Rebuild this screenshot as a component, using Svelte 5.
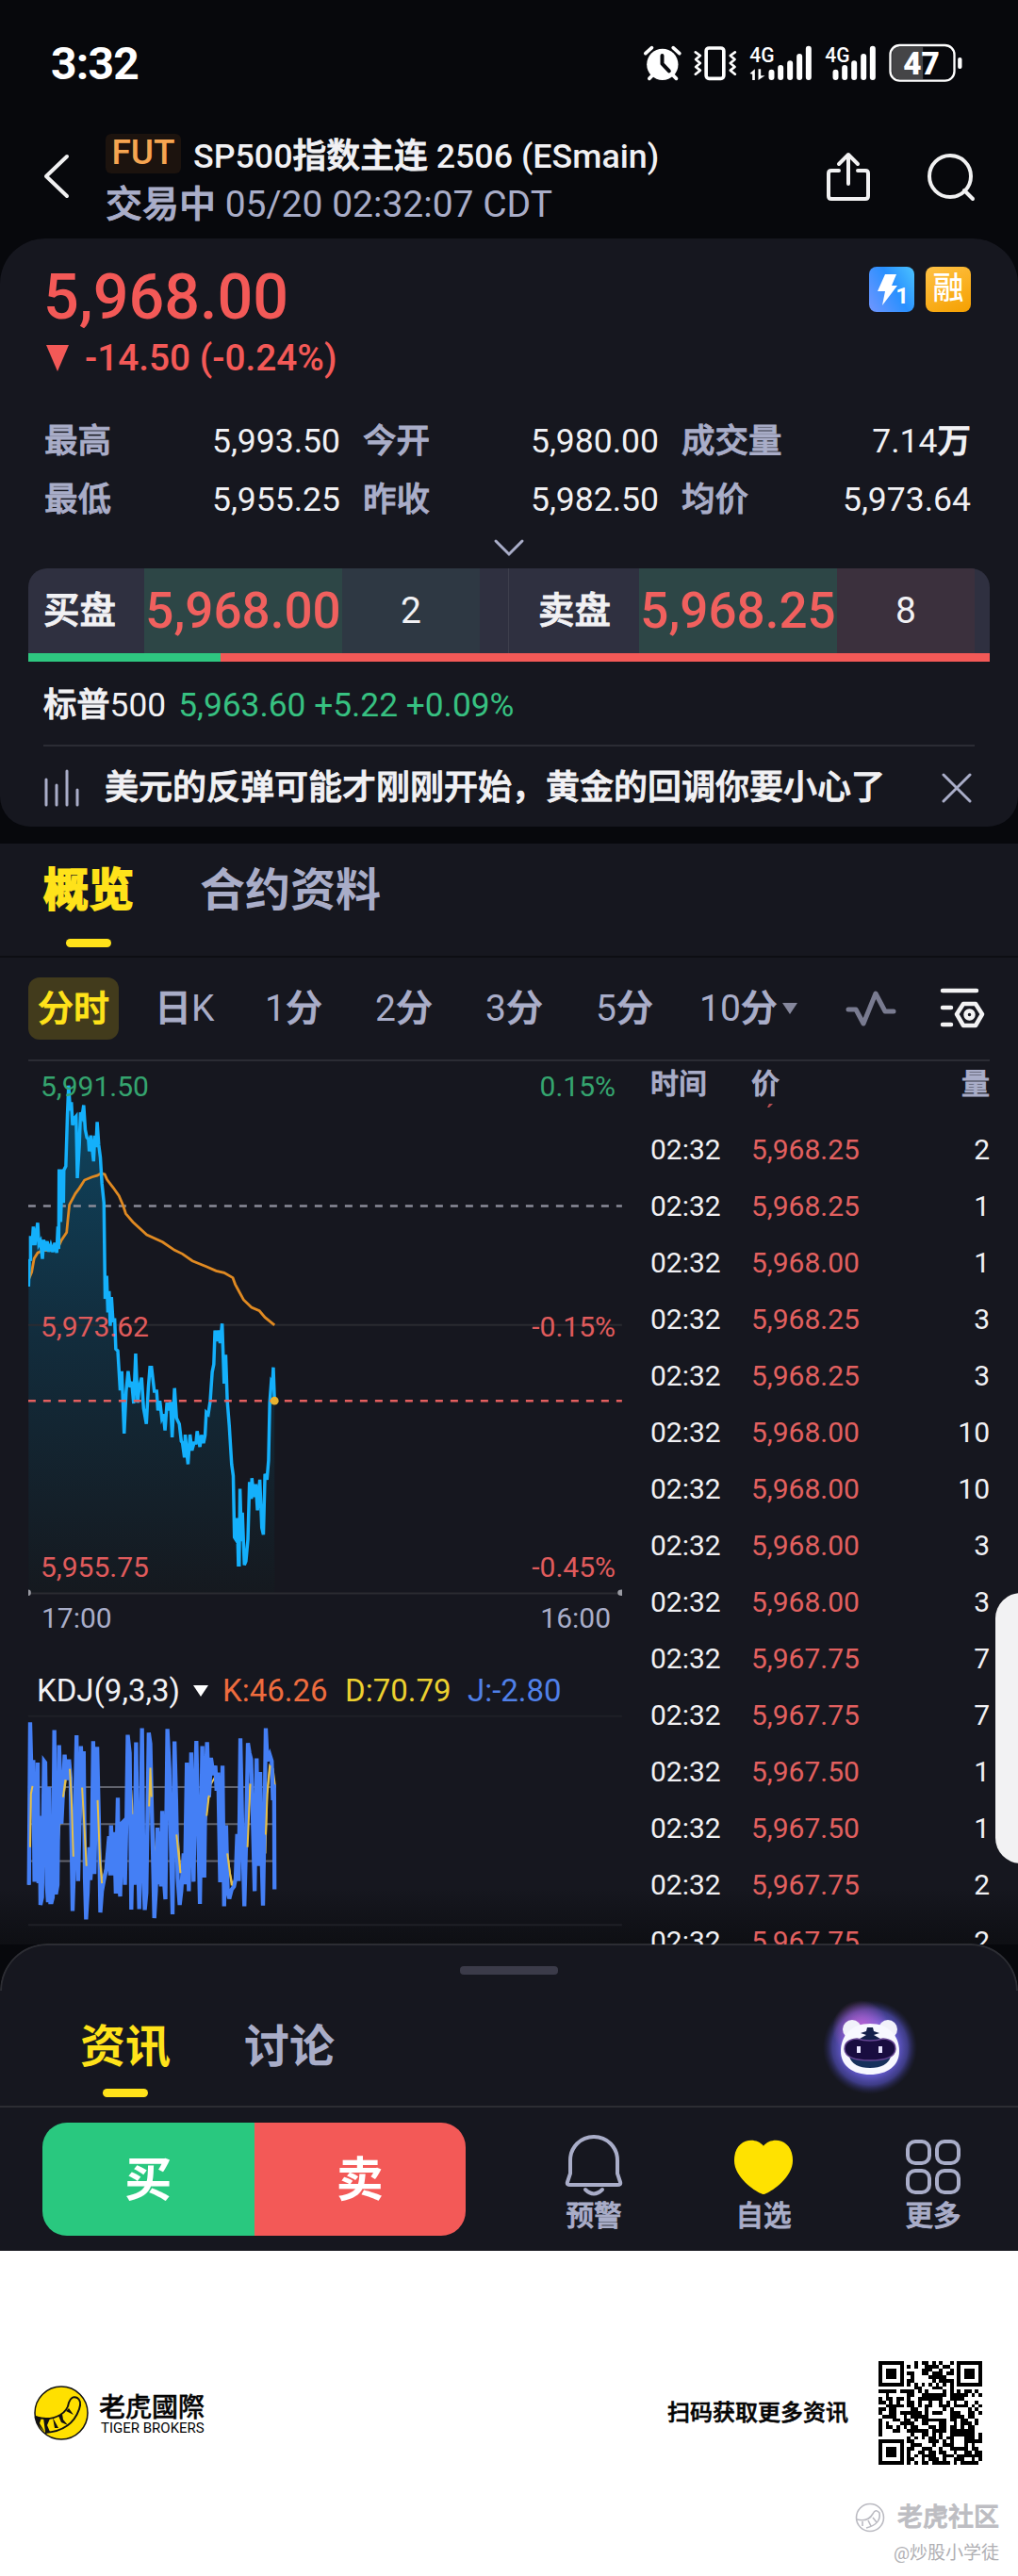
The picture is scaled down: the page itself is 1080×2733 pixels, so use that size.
<script>
  const stats = [
    ['最高', '5,993.50', ''], ['今开', '5,980.00', ''], ['成交量', '7.14', '万'],
    ['最低', '5,955.25', ''], ['昨收', '5,982.50', ''], ['均价', '5,973.64', '']
  ];
  const quotes = [
    { side: 'buy', label: '买盘', price: '5,968.00', qty: 2 },
    { side: 'sell', label: '卖盘', price: '5,968.25', qty: 8 }
  ];
  const periods = ['日K', '1分', '2分', '3分', '5分', '10分'].map((p) => {
    const m = p.match(/^(\d*)(\D)(.*)$/);
    return { num: m[1], zh: m[2], tail: m[3] };
  });
  const ticks = [
    ['5,968.25', 2], ['5,968.25', 1], ['5,968.00', 1], ['5,968.25', 3], ['5,968.25', 3],
    ['5,968.00', 10], ['5,968.00', 10], ['5,968.00', 3], ['5,968.00', 3], ['5,967.75', 7],
    ['5,967.75', 7], ['5,967.50', 1], ['5,967.50', 1], ['5,967.75', 2], ['5,967.75', 2]
  ];

  const priceLine =
    '72,598 74,530 77,528 77,466 81,490 84,442 88,490 91,462 95,432 98,488 102,480 107,526 110,476 115,505 119,480 123,507 128,490 133,508 138,484 143,510 146,442 148,500 149,293 153,430 157,293 160,380 161,295 166,285 170,150 173,75 177,140 180,118 183,178 188,160 192,155 195,316 200,230 203,145 207,155 211,126 215,190 219,210 223,215 225,246 229,205 233,245 236,272 239,205 242,235 245,170 249,230 253,262 257,330 262,380 265,630 269,570 272,665 275,610 278,700 281,625 285,690 289,680 292,760 297,765 303,868 307,818 313,980 318,870 323,818 328,860 332,845 337,902 342,772 347,900 351,860 357,835 362,915 369,955 374,860 378,808 382,808 389,870 395,870 398,920 403,895 408,940 412,930 416,972 421,900 426,920 430,898 434,990 440,862 445,940 452,955 457,1000 460,1004 465,1042 467,983 471,1030 474,1060 479,983 484,1024 489,1005 494,1005 497,974 504,1015 508,984 513,1005 517,985 520,925 525,930 530,895 535,820 539,800 542,712 547,740 551,712 555,745 560,694 565,850 569,775 573,895 578,960 584,1060 588,1090 591,1250 596,1258 598,1200 601,1322 603,1322 605,1124 609,1260 611,1186 616,1322 620,1312 625,1255 629,1106 634,1150 635,1096 640,1145 645,1112 649,1180 655,1100 660,1225 664,1243 668,1085 673,1100 677,1050 680,900 684,845 687,850 689,808 692,895';
  const avgLine =
    '72,580 80,560 86,525 95,510 107,504 130,504 145,500 155,477 168,457 171,425 175,385 190,356 200,342 213,321 232,313 245,309 255,303 264,306 270,320 285,340 300,362 310,386 317,408 335,430 370,463 410,482 440,503 460,513 485,531 520,546 545,557 565,562 587,575 593,592 605,615 614,632 634,652 654,661 668,678 692,698';

  // Turning points of the J curve: [x, y] alternating highs and lows
  const jLine =
    '73,720 76,202 80,400 84,322 87,710 91,600 95,330 97,715 100,500 102,784 106,760 111,325 114,330 118,720 121,775 124,408 127,775 130,775 133,760 137,227 141,750 145,720 149,275 153,440 155,525 159,420 163,305 167,380 170,380 174,320 178,380 183,803 187,650 190,440 193,243 197,708 201,500 204,278 208,400 211,294 214,700 217,830 221,745 225,600 228,705 231,640 235,262 238,685 242,450 245,280 249,500 253,808 257,740 262,705 268,670 275,565 278,690 280,530 284,690 288,552 292,748 297,442 299,700 303,757 307,524 310,520 315,720 319,500 322,242 327,300 331,799 336,495 339,720 343,266 347,600 351,797 355,500 358,221 362,700 365,800 369,745 375,235 379,270 385,600 389,826 393,740 397,538 400,718 404,550 406,725 409,484 413,700 417,766 422,223 427,350 431,600 435,814 440,263 444,450 448,700 453,784 457,740 463,620 466,718 471,330 476,740 482,298 488,710 492,400 495,261 499,500 504,781 510,278 515,697 518,400 522,265 527,440 532,315 538,370 543,340 546,420 550,362 555,712 561,340 565,788 570,530 574,740 578,764 584,735 590,725 594,700 598,558 602,708 606,253 611,550 616,788 620,600 625,268 629,300 633,320 637,500 642,740 647,317 651,660 656,360 659,600 663,786 667,500 670,221 674,325 680,305 685,325 688,450 691,400 692,734';
  const dLine =
    '73,720 77,480 80,410 92,560 104,575 112,660 122,640 131,700 138,560 146,600 152,500 160,440 166,385 174,335 180,440 187,640 193,590 200,560 208,410 213,500 219,690 226,640 234,570 244,420 250,560 257,715 264,680 272,640 282,620 295,650 305,610 315,640 325,420 331,420 338,560 347,540 355,620 363,560 370,670 375,480 379,345 384,500 391,640 397,560 407,640 415,690 422,480 430,430 440,500 448,560 455,682 463,650 473,540 482,500 490,480 500,560 507,600 515,560 523,460 531,400 545,370 555,440 563,520 572,600 579,680 586,720 594,700 602,600 610,560 618,620 626,500 631,395 638,440 646,520 655,480 663,560 669,620 673,430 680,340 688,350 694,410';

  const qr = [
    '#######...#.##.#.#..#.#######', '#.....#.#.#..####.##..#.....#', '#.###.#.....###..#..#.#.###.#',
    '#.###.#.##..##.###.##.#.###.#', '#.###.#..#....#####...#.###.#', '#.....#.##.....#.####.#.....#',
    '#######.#.#.#.#.#.#.#.#######', '..........##...###..#........', '#####.####.#.#....#.#.#.##.#.',
    '..#.....##..#######.#####.#.#', '#.##.##.#..#######..####.....', '##.#.#..##.#..#..#.#.#..#..#.',
    '..#####.##.#.##..###.####.#.#', '##.##....##..#....#.#....#.#.', '#..##.######.#.###..###..##.#',
    '.####..#.#####......####.##..', '#...##.##.#.#######.##.##..#.', '#.#...####..##...##..#.###.#.',
    '#.##.#.#.##...##.##.##.#.##..', '#...##..######.####.#######..', '#........#..##.#.#..#######.#',
    '........#.#.#.##.#.##...###.#', '#######.##....###.#.#...#####', '#.....#..###...#..###...#.#..',
    '#.###.#.##..###..#..#####.##.', '#.###.#.#..##.##.##..#..##.##', '#.###.#.#.#.####..###.#######',
    '#.....#.##..#.###.#..###..#.#', '#######.#.#.##.#####.#.#####.'
  ];
  const qrPath = qr.flatMap((row, y) => [...row].map((c, x) => (c === '#' ? `M${x} ${y}h1v1h-1z` : ''))).join('');
</script>

<div class="screen">
  <div class="status">
    <span class="clock">3:32</span>
    <svg class="sys" viewBox="30 45 1040 135">
      <g fill="#fff">
        <circle cx="98" cy="115" r="50" />
        <path d="M44 80L64 62M152 80L132 62M56 160L70 146M142 160L128 146" stroke="#fff" stroke-width="11" stroke-linecap="round" />
        <path d="M97 87V113L119 136" fill="none" stroke="#07080c" stroke-width="12" stroke-linecap="round" stroke-linejoin="round" />
        <rect x="237" y="63" width="56" height="97" rx="9" fill="none" stroke="#fff" stroke-width="11" />
        <path d="M203 76L218 87L204 99L218 111L204 123L218 134L203 146M329 76L314 87L328 99L314 111L328 123L314 134L329 146" fill="none" stroke="#fff" stroke-width="8" stroke-linecap="round" stroke-linejoin="round" />
        <text x="375" y="109" font-size="68" font-weight="500" textLength="79" lengthAdjust="spacingAndGlyphs">4G</text>
        <text x="615" y="109" font-size="68" font-weight="500" textLength="79" lengthAdjust="spacingAndGlyphs">4G</text>
        <path d="M376 144L392 130V165H384V146zM403 130V165L424 151H411V130z" />
        <path d="M445 140V156M474 126V156M504 112V156M534 90V156M563 65V156M649 140V156M678 126V156M708 112V156M738 90V156M767 65V156" stroke="#fff" stroke-width="18" stroke-linecap="round" />
        <path d="M927 60H850Q828 60 828 84V138Q828 162 850 162H927z" fill="#454547" />
        <rect x="823" y="54" width="204" height="113" rx="30" fill="none" stroke="#fff" stroke-width="7" />
        <rect x="1038" y="93" width="13" height="36" rx="6" />
        <text x="864" y="146" font-size="98" font-weight="900" textLength="116" lengthAdjust="spacingAndGlyphs">47</text>
      </g>
    </svg>
  </div>

  <header class="head">
    <svg class="back" viewBox="0 0 28 46"><path d="M25 2L3 23L25 44" /></svg>
    <div class="titles">
      <div class="title"><span class="fut">FUT</span><span class="name">SP500<span class="zh">指数主连</span> 2506 (ESmain)</span></div>
      <div class="sub"><span class="zh">交易中</span> 05/20 02:32:07 CDT</div>
    </div>
    <svg class="share" viewBox="0 0 46 52"><path d="M13 20H5Q2 20 2 23V47Q2 50 5 50H41Q44 50 44 47V23Q44 20 41 20H33M23 34V3M13 13L23 3L33 13" /></svg>
    <svg class="search" viewBox="0 0 52 52"><circle cx="25" cy="25" r="22" /><path d="M40 40L49 49" /></svg>
  </header>

  <section class="card">
    <div class="quote">
      <div>
        <div class="price">5,968.00</div>
        <div class="change"><svg viewBox="0 0 24 28"><path d="M0 0H24L12 28z" fill="#f35957" /></svg>-14.50 (-0.24%)</div>
      </div>
      <div class="badges">
        <span class="badge level">
          <svg viewBox="0 0 48 48"><path d="M17 8H29L24 20H30L14 41L17 26H9z" fill="#fff" /></svg><b>1</b>
        </span>
        <span class="badge margin">融</span>
      </div>
    </div>

    <div class="stats">
      {#each stats as [label, value, unit]}
        <div class="stat"><span class="zh">{label}</span><span class="val">{value}<span class="zh">{unit}</span></span></div>
      {/each}
    </div>
    <svg class="expand" viewBox="0 0 32 18"><path d="M2 2L16 16L30 2" /></svg>

    <div class="book">
      {#each quotes as q}
        <div class="side {q.side}">
          <span class="lbl zh">{q.label}</span><span class="px">{q.price}</span><span class="qty">{q.qty}</span>
        </div>
      {/each}
    </div>
    <div class="ratio"><i></i></div>

    <div class="index"><span><span class="zh">标普</span>500</span><span class="up">5,963.60 +5.22 +0.09%</span></div>
    <div class="news">
      <svg class="bars" viewBox="0 0 38 40"><path d="M2 11V38M13 17V38M24 2V38M35 22V38" /></svg>
      <span class="zh headline">美元的反弹可能才刚刚开始，黄金的回调你要小心了</span>
      <svg class="close" viewBox="0 0 32 32"><path d="M2 2L30 30M30 2L2 30" /></svg>
    </div>
  </section>

  <section class="overview">
    <nav class="tabs"><span class="tab on">概览</span><span class="tab">合约资料</span></nav>
    <div class="periods">
      <span class="pill zh">分时</span>
      {#each periods as p}
        <span class="period">{p.num}<span class="zh">{p.zh}</span>{p.tail}</span>
      {/each}
      <svg class="caret" viewBox="0 0 16 12"><path d="M0 0H16L8 12z" /></svg>
      <svg class="pulse" viewBox="0 0 54 38"><path d="M3 20H11L19 35L32 3L42 22H51" /></svg>
      <svg class="config" viewBox="0 0 48 44">
        <path d="M3 3H39M3 21H12M3 39H12" /><path d="M25 17H38L45 28L38 40H25L18 28z" /><circle cx="31.500" cy="28.500" r="4" />
      </svg>
    </div>

    <div class="market">
      <div class="charts">
        <div class="plot">
          <svg class="lines" viewBox="71.300 12 1497 1390" preserveAspectRatio="none">
            <defs>
              <linearGradient id="area" x1="0" y1="75" x2="0" y2="1396" gradientUnits="userSpaceOnUse">
                <stop offset="0" stop-color="#0f4560" /><stop offset="0.500" stop-color="#122c3c" /><stop offset="1" stop-color="#15191f" />
              </linearGradient>
            </defs>
            <polygon points="{priceLine} 692,1396 72,1396" fill="url(#area)" />
            <path d="M71 698H1568M71 1396H1568" stroke="#2a2b31" stroke-width="2" />
            <path d="M71 388H1568" stroke="#8b8c99" stroke-width="2.500" stroke-dasharray="8 8" />
            <polyline points={avgLine} stroke="#e08a22" stroke-width="2.800" />
            <polyline points={priceLine} stroke="#14b0fb" stroke-width="3.500" />
            <path d="M71 895H1568" stroke="#e45f5f" stroke-width="2.500" stroke-dasharray="8 8" />
            <ellipse cx="692" cy="895" rx="10.500" ry="10.800" fill="#e9b22f" />
            <ellipse cx="71" cy="1394" rx="7" ry="8" fill="#9a9ba3" /><ellipse cx="1567" cy="1394" rx="10" ry="8" fill="#9a9ba3" />
          </svg>
          <div class="scale">
            <div class="up"><span>5,991.50</span><span>0.15%</span></div>
            <div><span>5,973.62</span><span>-0.15%</span></div>
            <div><span>5,955.75</span><span>-0.45%</span></div>
          </div>
        </div>
        <div class="hours"><span>17:00</span><span>16:00</span></div>
        <div class="kdj">
          <span>KDJ(9,3,3)</span>
          <svg viewBox="0 0 16 12"><path d="M0 0H16L8 12z" fill="#fff" /></svg>
          <span class="k">K:46.26</span><span class="d">D:70.79</span><span class="j">J:-2.80</span>
        </div>
        <svg class="osc" viewBox="71.300 180 1497 670" preserveAspectRatio="none">
          <path d="M71 182H1568M71 848H1568" stroke="#1f2027" stroke-width="2" />
          <path d="M71 408H692M71 526H692M71 644H692" stroke="#62646e" stroke-width="2" />
          <polyline points={dLine} stroke="#e5c25c" stroke-width="2" />
          <polyline points={jLine} stroke="#447ff5" stroke-width="4.300" />
          <path d="M76 600L78 430L82 405M159 440L165 385M176 350L180 440L185 630M207 410L212 520L218 660M246 450L252 640L257 715M376 470L379 347L382 440M445 560L455 682M521 500L527 435M573 620L584 722M624 600L631 398M670 560L674 430L681 340" stroke="#e5c04a" stroke-width="2" />
        </svg>
      </div>

      <div class="ticks">
        <div class="tick thead zh"><span>时间</span><span>价</span><span>量</span></div>
        <div class="peek"><svg viewBox="0 0 6 4"><path d="M2 0H6L2 4H0z" fill="#b54d50" /></svg></div>
        {#each ticks as [price, size]}
          <div class="tick"><span>02:32</span><span class="down">{price}</span><span>{size}</span></div>
        {/each}
      </div>
    </div>
    <div class="fade"></div>
  </section>

  <section class="sheet">
    <i class="grip"></i>
    <div class="sheetrow">
      <nav class="tabs"><span class="tab on">资讯</span><span class="tab">讨论</span></nav>
      <svg class="bot" viewBox="-60 -60 120 120">
        <defs>
          <radialGradient id="glow"><stop offset="0.550" stop-color="#6a5fd8" /><stop offset="0.800" stop-color="#4b48a8" stop-opacity="0.750" /><stop offset="1" stop-color="#2a2a60" stop-opacity="0" /></radialGradient>
          <radialGradient id="pink"><stop offset="0.200" stop-color="#b35fce" stop-opacity="0.900" /><stop offset="1" stop-color="#b35fce" stop-opacity="0" /></radialGradient>
        </defs>
        <circle r="50" fill="url(#glow)" /><circle cx="-10" cy="-20" r="30" fill="url(#pink)" />
        <circle cx="-19" cy="-19" r="10" fill="#f1f1fa" /><circle cx="19" cy="-19" r="10" fill="#f1f1fa" />
        <path d="M0-25C20-25 31-12 31 4C31 20 18 29 0 29S-31 20-31 4C-31-12-20-25 0-25z" fill="#f7f7ff" />
        <path d="M-3-21H3L4-17L10-15L4-13L11-9L6-7L8-4L0-2L-8-4L-6-7L-11-9L-4-13L-10-15L-4-17z" fill="#14204a" />
        <path d="M-22 10Q0 17 22 10Q18 22 0 22T-22 10z" fill="#17305c" />
        <path d="M-14-9Q0-5 14-9Q27-8 27 2Q26 14 0 14T-27 2Q-27-8-14-9z" fill="#190d40" stroke="#654493" stroke-width="1.500" />
        <path d="M-12-1V6M11-1V6" stroke="#e9e5ff" stroke-width="4" />
      </svg>
    </div>
  </section>

  <footer class="actions">
    <div class="trade"><span class="b">买</span><span class="s">卖</span></div>
    <div class="act zh">
      <svg viewBox="0 0 60 66"><path d="M30 3C16 3 5 14 5 28V42L2 51Q1 54 5 54H55Q59 54 58 51L55 42V28C55 14 44 3 30 3z" fill="none" stroke="#a9adc8" stroke-width="4" /><path d="M21 59Q30 68 39 59" stroke="#a9adc8" stroke-width="4" fill="none" stroke-linecap="round" /></svg>
      预警
    </div>
    <div class="act zh">
      <svg viewBox="0 0 66 66"><path d="M33 12C42 1 65 4 65 28C65 46 43 61 36 64Q33 66 30 64C23 61 1 46 1 28C1 4 24 1 33 12z" fill="#ffe200" /></svg>
      自选
    </div>
    <div class="act zh">
      <svg viewBox="0 0 60 66"><g fill="none" stroke="#a9adc8" stroke-width="4"><rect x="3" y="8" width="23" height="23" rx="8" /><rect x="34" y="8" width="23" height="23" rx="8" /><rect x="3" y="39" width="23" height="23" rx="8" /><rect x="34" y="39" width="23" height="23" rx="8" /></g></svg>
      更多
    </div>
  </footer>

  <div class="promo">
    <svg class="logo" viewBox="0 0 58 58">
      <circle cx="29" cy="29" r="28" fill="#ffe000" stroke="#111" stroke-width="1.500" />
      <path d="M1 33Q16 38 28 31Q36 26 37 18Q40 10 46 13Q51 16 48 25Q40 48 12 50" fill="none" stroke="#111" stroke-width="2" />
      <path d="M1 32L8 34L6 40L12 50L3 40zM10 34L17 35L14 42L17 49H12zM20 34L22 45L26 45zM26 32L29 39L36 42L31 36L30 30zM34 27L42 31L37 24z" fill="#111" />
    </svg>
    <div class="brand"><span class="tc">老虎國際</span><span class="en">TIGER BROKERS</span></div>
    <span class="scan zh">扫码获取更多资讯</span>
    <svg class="qr" viewBox="0 0 29 29" shape-rendering="crispEdges"><path d={qrPath} /></svg>
  </div>
  <div class="mark">
    <div class="community">
      <svg viewBox="0 0 32 32"><circle cx="16" cy="16" r="14.500" /><path d="M2 18Q14 21 19 12Q22 6 26 11Q28 23 12 27M8 20V25M14 19L17 25M19 16L23 21" /></svg>
      <span class="zh">老虎社区</span>
    </div>
    <div class="author">@炒股小学徒</div>
  </div>
  <i class="edge"></i>
</div>

<style>
  :global(body) { margin: 0; background: #fff; }
  .screen { position: relative; width: 1080px; height: 2733px; overflow: hidden; background: linear-gradient(#07080c 2388px, #fff 2388px); color: #f1f1f4; font: 400 35.5px/44px Roboto, "Noto Sans CJK SC", sans-serif; white-space: nowrap; }
  .screen *, .screen { box-sizing: border-box; }
  svg { display: block; flex: none; overflow: visible; }
  .zh { font-weight: 500; -webkit-text-stroke: 0.9px currentColor; }

  .status { height: 134px; padding: 0 53px 0 54px; display: flex; align-items: center; justify-content: space-between; }
  .clock { font-size: 48px; font-weight: 700; color: #fff; letter-spacing: -0.8px; padding-top: 2px; }
  .sys { width: 347px; height: 45px; }

  .head { height: 119px; display: flex; align-items: flex-start; padding: 8px 45px 0 46px; }
  .head svg { fill: none; stroke: #f1f1f2; stroke-width: 4; stroke-linecap: round; stroke-linejoin: round; }
  .back { width: 28px; height: 46px; margin-top: 22px; }
  .titles { flex: 1; margin-left: 38px; }
  .title { height: 42px; display: flex; align-items: center; gap: 13px; }
  .fut { width: 80px; height: 42px; line-height: 40px; border-radius: 6px; background: #1c130e; color: #f6a551; font-size: 37px; font-weight: 500; text-align: center; }
  .name { font-size: 35.8px; font-weight: 500; padding-top: 5px; }
  .sub { font-size: 39px; line-height: 46px; margin-top: 10px; color: #a9adc8; }
  .share { width: 46px; height: 52px; margin-top: 19px; }
  .search { width: 52px; height: 52px; margin: 20px 0 0 60px; }

  .card { height: 624px; background: #16171f; border-radius: 48px 48px 32px 32px; }
  .quote { height: 189px; padding: 30px 50px 0 46px; display: flex; justify-content: space-between; }
  .price { font-size: 66.5px; line-height: 64px; font-weight: 500; color: #f35957; }
  .change { display: flex; align-items: center; gap: 17px; margin-top: 11px; padding-left: 3px; font-size: 38.8px; font-weight: 500; color: #f35957; }
  .change svg { width: 24px; height: 28px; }
  .badges { display: flex; gap: 12px; }
  .badge { position: relative; width: 48px; height: 48px; border-radius: 8px; font-size: 33px; line-height: 46px; text-align: center; font-weight: 500; color: #fff; }
  .badge b { position: absolute; right: 6px; bottom: -6px; font-size: 24px; }
  .level { background: linear-gradient(60deg, #7196ff, #2990ff 55%, #4bc3ff); }
  .margin { background: linear-gradient(155deg, #ffc246, #f5a000); }
  .stats { height: 124px; padding: 0 50px 0 47px; display: grid; grid-template-columns: 314px 314px 1fr; column-gap: 24px; grid-auto-rows: 62px; }
  .stat { display: flex; justify-content: space-between; line-height: 52px; color: #a9adc8; }
  .val { color: #f1f1f4; }
  .expand { width: 32px; height: 18px; margin: 6px auto 0; fill: none; stroke: #a9adc8; stroke-width: 3; stroke-linecap: round; }

  .book { display: flex; height: 90px; margin: 13px 30px 0; border-radius: 20px 20px 0 0; overflow: hidden; background: #2f3040; line-height: 90px; }
  .side { display: flex; width: 509px; }
  .side.sell { width: 511px; border-left: 1px solid #3d3e4c; }
  .lbl { width: 123px; padding-left: 16px; font-size: 38.5px; }
  .sell .lbl { width: 138px; padding-left: 31px; }
  .px { width: 210px; text-align: center; background: #2d4646; color: #f0605e; font-size: 53px; font-weight: 500; }
  .qty { width: 146px; text-align: center; background: #2e3843; font-size: 39px; }
  .sell .qty { background: #3b303d; }
  .ratio { height: 9px; margin: 0 30px; background: #f35957; }
  .ratio i { display: block; width: 204px; height: 9px; background: #2ec780; }
  .index { height: 90px; margin: 0 46px; display: flex; align-items: center; gap: 13px; border-bottom: 2px solid #2b2c34; padding-top: 4px; font-size: 35.3px; }
  .up { color: #37c181; }
  .news { height: 83px; display: flex; align-items: center; padding: 4px 49px 0 47px; }
  .news svg { fill: none; stroke: #a9adc8; stroke-width: 3; stroke-linecap: round; }
  .bars { width: 38px; height: 40px; }
  .headline { flex: 1; margin-left: 26px; font-size: 36px; }
  .close { width: 32px; height: 32px; }

  .overview { position: relative; height: 1168px; margin-top: 18px; background: #16171f; overflow: hidden; }
  .overview > .tabs { height: 121px; border-bottom: 2px solid #0d0e13; padding: 26px 46px 0; }
  .tabs { display: flex; gap: 70px; }
  .tab { position: relative; font-size: 48px; line-height: 48px; font-weight: 700; color: #a9adc8; }
  .on { color: #ffe21a; }
  .on::after { content: ""; position: absolute; left: 50%; margin-left: -24px; width: 48px; height: 9px; border-radius: 5px; background: #ffe21a; top: 75px; }
  .overview .on { -webkit-text-stroke: 1.8px currentColor; }
  .periods { height: 108px; padding: 0 35px 0 30px; display: flex; align-items: center; color: #a9adc8; font-size: 39px; }
  .pill { width: 96px; height: 66px; line-height: 66px; text-align: center; border-radius: 12px; background: #423b1c; color: #ffe21a; margin-right: 36px; font-size: 38px; }
  .period { width: 117px; }
  .period:nth-of-type(2) { width: 119px; padding-left: 2px; }
  .period:nth-of-type(7) { width: auto; margin-left: -7px; }
  .periods svg { stroke-linecap: round; stroke-linejoin: round; fill: none; }
  .caret { width: 16px; height: 12px; margin-left: auto; }
  .periods .caret { fill: #85879c; }
  .pulse { width: 54px; height: 38px; margin: 0 46px 0 51px; stroke: #797b90; stroke-width: 5; }
  .config { width: 48px; height: 44px; stroke: #f3f3f4; stroke-width: 4.5; }

  .market { position: relative; z-index: 1; display: flex; margin: 0 30px; border-top: 2px solid #2b2c34; }
  .charts { width: 630px; }
  .plot { position: relative; height: 567px; overflow: hidden; }
  .lines, .osc { width: 630px; fill: none; }
  .lines { height: 567px; }
  .lines :global(*), .osc :global(*) { vector-effect: non-scaling-stroke; }
  .scale { position: absolute; inset: 7px 7px 7px 13px; display: flex; flex-direction: column; justify-content: space-between; height: 550px; font-size: 30px; line-height: 40px; color: #e05b5c; }
  .scale div { display: flex; justify-content: space-between; }
  .scale .up { color: #35a56f; }
  .hours { display: flex; justify-content: space-between; height: 50px; padding: 0 12px 0 14px; font-size: 30px; line-height: 48px; color: #a9adc8; }
  .kdj { display: flex; align-items: center; height: 77px; padding: 24px 0 0 9px; font-size: 33px; }
  .kdj svg { width: 16px; height: 12px; margin: 0 15px 0 14px; }
  .k { color: #ee6c3e; width: 130px; }
  .d { color: #ecd030; width: 130px; }
  .j { color: #5080e8; }
  .osc { height: 223px; }
  .ticks { width: 390px; padding: 1px 0 0 30px; font-size: 30px; }
  .tick { display: grid; grid-template-columns: 107px 1fr auto; height: 60px; line-height: 60px; }
  .thead { height: 43px; line-height: 46px; color: #a9adc8; }
  .peek { height: 20px; padding: 1px 0 0 124px; }
  .peek svg { width: 6px; height: 4px; }
  .down { color: #e2605f; }
  .fade { position: absolute; inset: auto 0 0; height: 60px; background: linear-gradient(#0a0b0e00, #0a0b0eb0); }

  .sheet { position: relative; height: 174px; margin-top: -1px; border-bottom: 2px solid #2c2d33; background: linear-gradient(#0000 50px, #16171f 50px); }
  .sheet::before { content: ""; position: absolute; inset: 0; border: 2px solid #2c2d33; border-bottom: 0; border-radius: 50px 50px 0 0; background: #16171f; mask: linear-gradient(#000 50px, #0000 50px); }
  .grip { position: relative; display: block; width: 104px; height: 9px; margin: 0 auto; top: 24px; border-radius: 4px; background: #3b3b49; }
  .sheetrow { position: relative; display: flex; align-items: center; justify-content: space-between; height: 202px; padding: 0 97px 0 85px; }
  .sheetrow .tabs { gap: 78px; }
  .sheetrow .on::after { top: 68px; }
  .bot { width: 120px; height: 120px; }

  .actions { display: flex; height: 152px; padding: 16px 0 0 45px; background: #16171f; }
  .trade { display: flex; width: 450px; height: 120px; border-radius: 26px; overflow: hidden; margin-right: 46px; }
  .trade span { flex: 1; text-align: center; font-size: 50px; line-height: 122px; font-weight: 700; color: #fff; }
  .b { background: #29c87f; }
  .s { background: #f35957; }
  .act { display: flex; flex: none; flex-direction: column; align-items: center; width: 180px; padding-top: 12px; color: #a9adc8; font-size: 29.5px; line-height: 42px; }
  .act svg { width: 64px; height: 66px; }

  .promo { display: flex; align-items: center; height: 344px; padding: 0 38px 0 36px; color: #050505; }
  .logo { width: 58px; height: 58px; }
  .brand { display: flex; flex-direction: column; margin-left: 11px; }
  .tc { font: 500 28px/32px "Noto Sans CJK TC", sans-serif; -webkit-text-stroke: 0.4px currentColor; }
  .en { font-size: 15px; line-height: 16px; padding-left: 2px; }
  .scan { margin: 0 32px 0 auto; font-size: 24px; -webkit-text-stroke-width: 0.6px; }
  .qr { width: 110px; height: 110px; fill: #000; }
  .mark { position: absolute; right: 20px; bottom: 8px; text-align: right; color: #bdbdc2; }
  .community { display: flex; align-items: center; gap: 13px; font-size: 27px; }
  .community svg { width: 32px; height: 32px; fill: none; stroke: #bbbbc2; stroke-width: 1.6; }
  .author { font-size: 19px; line-height: 32px; color: #b0b0b4; text-align: right; }
  .edge { position: absolute; right: -30px; top: 1690px; width: 54px; height: 287px; border-radius: 38px; background: #f2f2f3; }
</style>
